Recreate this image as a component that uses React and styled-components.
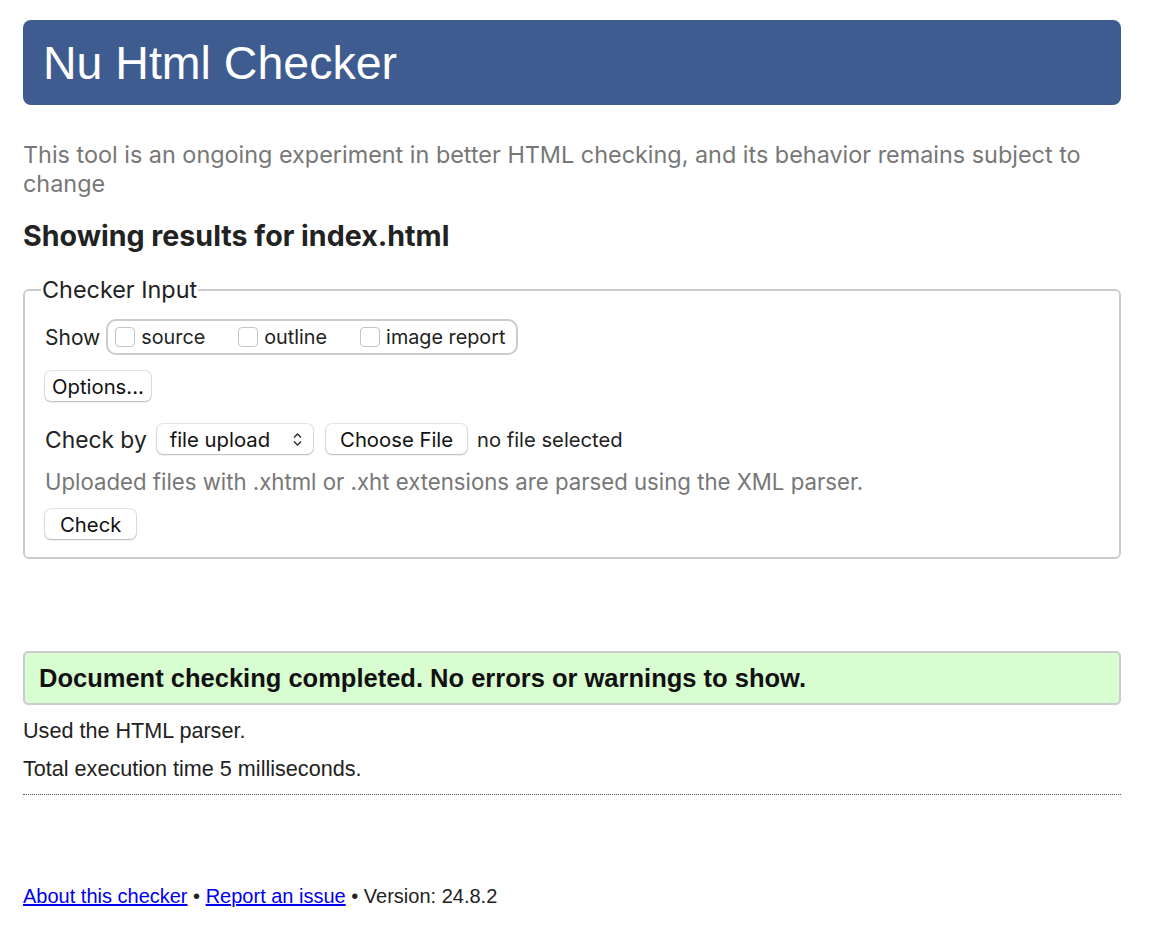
import React from "react";
import styled, { createGlobalStyle } from "styled-components";

const GlobalStyle = createGlobalStyle`
  html, body {
    margin: 0;
    padding: 0;
    background: #ffffff;
  }
  body {
    font-family: "Liberation Sans", Arial, Helvetica, sans-serif;
    color: #222222;
  }
`;

const ui = `Inter, "Noto Sans", sans-serif`;

const Page = styled.div`
  width: 1098px;
  padding: 20px 23px 0 23px;
  box-sizing: content-box;
`;

//header bar
const Header = styled.h1`
  margin: 0;
  height: 85px;
  display: flex;
  align-items: center;
  padding: 0 20px;
  background-color: #3e5c90;
  color: #ffffff;
  border-radius: 8px;
  font-size: 46.5px;
  font-weight: 400;
`;

const Intro = styled.p`
  margin: 35px 0 0 0;
  font-family: ${ui};
  color: #777777;
  font-size: 23.4px;
  line-height: 29px;
`;

const ResultTitle = styled.h2`
  margin: 22px 0 0 0;
  font-family: ${ui};
  font-size: 28.6px;
  font-weight: 700;
  line-height: 32px;
  color: #222222;
`;

const Fieldset = styled.fieldset`
  margin: 25px 0 0 0;
  padding: 6px 20px 18px 20px;
  border: 2px solid #cccccc;
  border-radius: 6px;
  min-width: 0;
  font-family: ${ui};
`;

const Legend = styled.legend`
  padding: 0 1px;
  margin-left: -4px;
  font-size: 23.4px;
  line-height: 26px;
`;

const Row = styled.div`
  display: flex;
  align-items: center;
  gap: ${(props) => props.gap || "8px"};
  margin-top: ${(props) => props.top || "0px"};
  font-size: 21px;
  color: #222222;
`;

const Label = styled.span`
  font-size: ${(props) => props.size || "21px"};
`;

const CheckGroup = styled.div`
  display: flex;
  align-items: center;
  height: 32px;
  padding: 0 11px 0 7px;
  border: 2px solid #cccccc;
  border-radius: 10px;
`;

const CheckItem = styled.label`
  display: flex;
  align-items: center;
  margin-right: ${(props) => (props.last ? "0" : "33px")};
  font-size: 19.8px;
`;

const Box = styled.span`
  width: 20px;
  height: 20px;
  margin-right: 6px;
  border: 1px solid #c4c4c4;
  border-radius: 4px;
  background: #ffffff;
  box-sizing: border-box;
`;

const Button = styled.div`
  display: inline-flex;
  align-items: center;
  height: 30px;
  padding: 0 ${(props) => props.pad || "15px"};
  margin-left: ${(props) => props.shift || "0px"};
  border-radius: 6px;
  background: #ffffff;
  box-shadow: 0 0 0 1px rgba(0, 0, 0, 0.1), 0 1px 2px rgba(0, 0, 0, 0.2);
  font-size: 20.3px;
  color: #111111;
  white-space: nowrap;
`;

const Select = styled(Button)`
  gap: 22px;
  padding: 0 10px 0 13px;
`;

const Help = styled.p`
  margin: 14px 0 0 0;
  font-size: 22.2px;
  color: #777777;
`;

const Success = styled.div`
  margin-top: 92px;
  height: 50px;
  display: flex;
  align-items: center;
  padding: 0 14px;
  background-color: #d8fdd1;
  border: 2px solid #cccccc;
  border-radius: 5px;
  font-size: 25.5px;
  font-weight: 700;
  color: #111111;
`;

const Note = styled.p`
  margin: ${(props) => props.top || "14px"} 0 0 0;
  font-size: 21.6px;
  line-height: 24px;
  color: #222222;
`;

const Divider = styled.hr`
  margin: 13px 0 0 0;
  border: 0;
  border-top: 1px dotted #555555;
`;

const Footer = styled.p`
  margin: 90px 0 0 0;
  font-size: 20px;
  color: #222222;
`;

const Link = styled.a`
  color: #0000ee;
  text-decoration: underline;
`;

const Updown = () => (
  <svg width="11" height="15" viewBox="0 0 11 15">
    <path d="M2 5.5 L5.5 2 L9 5.5" fill="none" stroke="#333" strokeWidth="1.5" />
    <path d="M2 9.5 L5.5 13 L9 9.5" fill="none" stroke="#333" strokeWidth="1.5" />
  </svg>
);

const App = () => {
  return (
    <>
      <GlobalStyle />
      <Page>
        <Header>Nu Html Checker</Header>
        <Intro>
          This tool is an ongoing experiment in better HTML checking, and its
          behavior remains subject to change
        </Intro>
        <ResultTitle>Showing results for index.html</ResultTitle>
        <Fieldset>
          <Legend>Checker Input</Legend>
          <Row top="10px" gap="6px">
            <Label size="21px">Show</Label>
            <CheckGroup>
              <CheckItem>
                <Box />
                source
              </CheckItem>
              <CheckItem>
                <Box />
                outline
              </CheckItem>
              <CheckItem last>
                <Box />
                image report
              </CheckItem>
            </CheckGroup>
          </Row>
          <Row top="16px">
            <Button pad="7px">Options...</Button>
          </Row>
          <Row top="23px" gap="10px">
            <Label size="22.8px">Check by</Label>
            <Select>
              file upload
              <Updown />
            </Select>
            <Button pad="14px" shift="3px">
              Choose File
            </Button>
            <Label size="20.2px">no file selected</Label>
          </Row>
          <Help>Uploaded files with .xhtml or .xht extensions are parsed using the XML parser.</Help>
          <Row top="14px">
            <Button pad="15px">Check</Button>
          </Row>
        </Fieldset>
        <Success>Document checking completed. No errors or warnings to show.</Success>
        <Note top="14px">Used the HTML parser.</Note>
        <Note top="14px">Total execution time 5 milliseconds.</Note>
        <Divider />
        <Footer>
          <Link href="#">About this checker</Link> • <Link href="#">Report an issue</Link> •
          Version: 24.8.2
        </Footer>
      </Page>
    </>
  );
};

export default App;
